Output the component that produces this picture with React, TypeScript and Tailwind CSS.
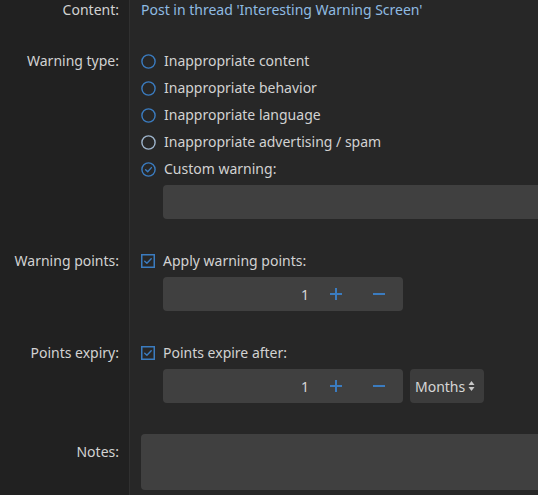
import type { ReactNode } from 'react'

const font = { fontFamily: '"Noto Sans", "Liberation Sans", sans-serif' }

function Row({ label, labelClass = '', children, className = '' }: { label: string; labelClass?: string; children: ReactNode; className?: string }) {
  return (
    <div className="grid grid-cols-[130px_1fr]">
      <div className={`bg-[#212121] border-r border-[#303030] pr-[10px] text-right text-[#d2d2d2] leading-5 ${className} ${labelClass}`}>
        {label}
      </div>
      <div className={`pl-[11px] ${className}`}>{children}</div>
    </div>
  )
}

function Radio({ checked = false, hover = false }: { checked?: boolean; hover?: boolean }) {
  const color = hover ? '#9fb5cc' : '#3b7cc0'
  return (
    <svg width="15" height="15" viewBox="0 0 15 15" className="shrink-0">
      <circle cx="7.5" cy="7.5" r="6.6" fill="none" stroke={color} strokeWidth="1.4" />
      {checked && <path d="M4.6 7.7 L6.7 9.7 L10.4 5.6" fill="none" stroke={color} strokeWidth="1.4" strokeLinecap="round" strokeLinejoin="round" />}
    </svg>
  )
}

function Check() {
  return (
    <svg width="14" height="14" viewBox="0 0 14 14" className="shrink-0">
      <rect x="0.75" y="0.75" width="12.5" height="12.5" fill="none" stroke="#3b7cc0" strokeWidth="1.5" />
      <path d="M3.7 7.2 L5.9 9.3 L10.2 4.7" fill="none" stroke="#3b7cc0" strokeWidth="1.4" strokeLinecap="round" strokeLinejoin="round" />
    </svg>
  )
}

function Option({ icon, text }: { icon: ReactNode; text: string }) {
  return (
    <div className="flex items-center gap-2 h-5 leading-5">
      {icon}
      <span>{text}</span>
    </div>
  )
}

function NumberBox() {
  return (
    <div className="flex h-[34px] w-[240px] items-center rounded bg-[#404040]">
      <span className="flex-1 pr-[6px] text-right text-[#d6d6d6]">1</span>
      <span className="flex w-[42px] justify-center">
        <svg width="14" height="14" viewBox="0 0 14 14">
          <path d="M7 1 V13 M1 7 H13" stroke="#3b7cc0" strokeWidth="2" />
        </svg>
      </span>
      <span className="flex w-[46px] justify-center pr-[2px]">
        <svg width="14" height="14" viewBox="0 0 14 14">
          <path d="M1 7 H13" stroke="#3b7cc0" strokeWidth="2" />
        </svg>
      </span>
    </div>
  )
}

export default function App() {
  return (
    <div className="h-[495px] w-[538px] overflow-hidden bg-[#272727] text-[14px] text-[#d2d2d2]" style={font}>
      <Row label="Content:" className="pb-[31px]">
        <div className="leading-5 text-[#8fbbe2]">Post in thread 'Interesting Warning Screen'</div>
      </Row>

      <Row label="Warning type:" className="pb-[32px]">
        <div className="flex flex-col gap-[7px]">
          <Option icon={<Radio />} text="Inappropriate content" />
          <Option icon={<Radio />} text="Inappropriate behavior" />
          <Option icon={<Radio />} text="Inappropriate language" />
          <Option icon={<Radio hover />} text="Inappropriate advertising / spam" />
          <Option icon={<Radio checked />} text="Custom warning:" />
        </div>
        <div className="ml-[22px] mt-[6px] h-[34px] w-[420px] rounded bg-[#404040]" />
      </Row>

      <Row label="Warning points:" className="pb-[32px]">
        <Option icon={<Check />} text="Apply warning points:" />
        <div className="ml-[22px] mt-[6px]">
          <NumberBox />
        </div>
      </Row>

      <Row label="Points expiry:" className="pb-[31px]">
        <Option icon={<Check />} text="Points expire after:" />
        <div className="ml-[22px] mt-[6px] flex gap-[7px]">
          <NumberBox />
          <div className="flex h-[34px] w-[74px] items-center gap-[3px] rounded bg-[#3c3c3c] pl-[5px] text-[#d6d6d6]">
            <span>Months</span>
            <svg width="7" height="12" viewBox="0 0 7 12">
              <path d="M3.5 1 L6.5 5 H0.5 Z M3.5 11 L6.5 7 H0.5 Z" fill="#c8c8c8" />
            </svg>
          </div>
        </div>
      </Row>

      <Row label="Notes:" labelClass="pt-[8px]" className="pb-[10px]">
        <div className="h-[56px] w-[420px] rounded bg-[#404040]" />
      </Row>
    </div>
  )
}
